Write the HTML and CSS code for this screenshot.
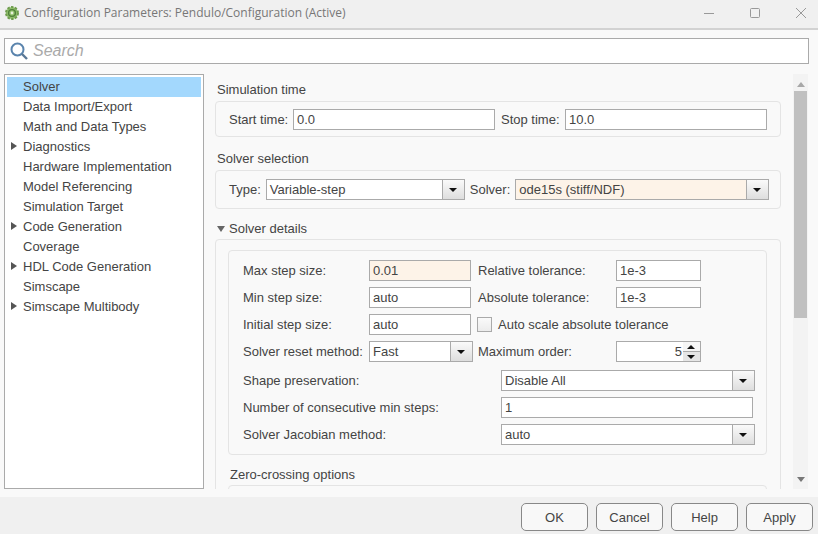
FILE: index.html
```html
<!DOCTYPE html>
<html lang="en">
<head>
    <meta charset="UTF-8">
    <title>Configuration Parameters</title>
    <link rel="stylesheet" href="styles.css">
</head>
<body>
    <div class="window">
        <header class="titlebar">
            <svg class="app-icon" width="16" height="16" viewBox="0 0 16 16">
                <circle cx="8" cy="8" r="6" fill="#8fbf6a" stroke="#6f9c4e" stroke-width="2" stroke-dasharray="2.4 1.4"/>
                <circle cx="8" cy="8" r="3.4" fill="none" stroke="#4f7f3a" stroke-width="1.4"/>
                <circle cx="8" cy="8" r="1.4" fill="#e8f0dc"/>
            </svg>
            <span class="title">Configuration Parameters: Pendulo/Configuration (Active)</span>
            <div class="window-buttons">
                <svg width="12" height="12" viewBox="0 0 12 12"><path d="M1 6.5h10" stroke="#999" fill="none"/></svg>
                <svg width="12" height="12" viewBox="0 0 12 12"><rect x="1.5" y="1.5" width="9" height="9" rx="1" stroke="#999" fill="none"/></svg>
                <svg width="12" height="12" viewBox="0 0 12 12"><path d="M1 1l10 10M11 1L1 11" stroke="#999" fill="none"/></svg>
            </div>
        </header>

        <div class="search">
            <svg width="20" height="20" viewBox="0 0 20 20">
                <circle cx="8.5" cy="8.5" r="6" fill="none" stroke="#5a84ad" stroke-width="2"/>
                <path d="M13 13l5 5" stroke="#5a7896" stroke-width="2.4" fill="none"/>
            </svg>
            <span>Search</span>
        </div>

        <div class="content">
            <ul class="tree">
                <li class="selected">Solver</li>
                <li>Data Import/Export</li>
                <li>Math and Data Types</li>
                <li class="expandable">Diagnostics</li>
                <li>Hardware Implementation</li>
                <li>Model Referencing</li>
                <li>Simulation Target</li>
                <li class="expandable">Code Generation</li>
                <li>Coverage</li>
                <li class="expandable">HDL Code Generation</li>
                <li>Simscape</li>
                <li class="expandable">Simscape Multibody</li>
            </ul>

            <main class="pane">
                <h2 class="group-title">Simulation time</h2>
                <section class="panel time-panel">
                    <label>Start time:</label>
                    <div class="field time-field">0.0</div>
                    <label>Stop time:</label>
                    <div class="field time-field">10.0</div>
                </section>

                <h2 class="group-title">Solver selection</h2>
                <section class="panel solver-panel">
                    <label>Type:</label>
                    <div class="combo type-combo"><span>Variable-step</span><i></i></div>
                    <label>Solver:</label>
                    <div class="combo solver-combo modified"><span>ode15s (stiff/NDF)</span><i></i></div>
                </section>

                <h2 class="group-title details-title"><b class="caret-down"></b>Solver details</h2>
                <section class="panel outer-panel">
                    <div class="panel inner-panel">
                        <div class="grid-top">
                            <label>Max step size:</label>
                            <div class="field step-field modified">0.01</div>
                            <label>Relative tolerance:</label>
                            <div class="field tol-field">1e-3</div>

                            <label>Min step size:</label>
                            <div class="field step-field">auto</div>
                            <label>Absolute tolerance:</label>
                            <div class="field tol-field">1e-3</div>

                            <label>Initial step size:</label>
                            <div class="field step-field">auto</div>
                            <label class="check-label"><b class="checkbox"></b>Auto scale absolute tolerance</label>

                            <label>Solver reset method:</label>
                            <div class="combo reset-combo"><span>Fast</span><i></i></div>
                            <label>Maximum order:</label>
                            <div class="field tol-field spinner"><span>5</span><div class="spin-arrows"><i class="up"></i><i></i></div></div>
                        </div>
                        <div class="grid-bottom">
                            <label>Shape preservation:</label>
                            <div class="combo wide-combo"><span>Disable All</span><i></i></div>
                            <label>Number of consecutive min steps:</label>
                            <div class="field wide-field">1</div>
                            <label>Solver Jacobian method:</label>
                            <div class="combo wide-combo"><span>auto</span><i></i></div>
                        </div>
                    </div>
                    <h2 class="group-title zero-title">Zero-crossing options</h2>
                    <div class="panel zero-panel"></div>
                </section>
            </main>

            <div class="scrollbar">
                <i class="arrow-up"></i>
                <div class="thumb"></div>
                <i class="arrow-down"></i>
            </div>
        </div>

        <footer class="buttons">
            <button>OK</button>
            <button>Cancel</button>
            <button>Help</button>
            <button>Apply</button>
        </footer>
    </div>
</body>
</html>
```

FILE: styles.css
```css
* {
    box-sizing: border-box;
}
html, body {
    margin: 0;
    padding: 0;
}
body {
    font-family: 'Liberation Sans', Arial, sans-serif;
    font-size: 13px;
    color: #444;
    background: #f9f9f9;
}
label {
    white-space: nowrap;
}
.window {
    width: 818px;
    height: 534px;
    overflow: hidden;
    display: flex;
    flex-direction: column;
}

/* title bar */
.titlebar {
    height: 30px;
    flex: none;
    display: flex;
    align-items: center;
    padding: 0 0 3px 4px;
    background: #f0f0f0;
    border-bottom: 2px solid #d2d2d2;
}
.app-icon {
    margin-right: 4px;
}
.title {
    font-family: 'Open Sans', sans-serif;
    font-size: 12px;
    color: #777;
}
.window-buttons {
    margin-left: auto;
    display: flex;
    gap: 34px;
    padding-right: 11px;
}

/* search */
.search {
    flex: none;
    height: 26px;
    margin: 8px 9px 10px 4px;
    padding-left: 4px;
    display: flex;
    align-items: center;
    gap: 4px;
    background: #fff;
    border: 1px solid #aaa;
}
.search span {
    font-size: 16px;
    font-style: italic;
    color: #aaa;
}

/* main area */
.content {
    flex: none;
    height: 415px;
    display: flex;
    padding-left: 4px;
}
.tree {
    width: 200px;
    flex: none;
    margin: 0;
    padding: 2px;
    list-style: none;
    background: #fff;
    border: 1px solid #aaa;
}
.tree li {
    position: relative;
    height: 20px;
    line-height: 20px;
    padding-left: 16px;
    color: #444;
}
.tree .selected {
    background: #a3d8fd;
}
.tree .expandable::before {
    content: "";
    position: absolute;
    left: 4px;
    top: 5px;
    border-left: 6px solid #555;
    border-top: 4px solid transparent;
    border-bottom: 4px solid transparent;
}

.pane {
    width: 589px;
    flex: none;
    padding-left: 11px;
    overflow: hidden;
}
.group-title {
    margin: 0;
    font-size: 13px;
    font-weight: normal;
    height: 15px;
    line-height: 15px;
    padding-left: 2px;
}
.pane > .group-title:first-child {
    margin-top: 8px;
}
.panel {
    border: 1px solid #e4e4e4;
    border-radius: 4px;
}
.time-panel {
    width: 566px;
    height: 36px;
    margin-top: 4px;
    margin-bottom: 14px;
    padding: 7px 0 0 13px;
    display: flex;
    align-items: flex-start;
}
.time-panel label {
    line-height: 21px;
    width: 64px;
}
.time-panel label:nth-of-type(2) {
    margin-left: 6px;
}
.field {
    height: 21px;
    line-height: 19px;
    padding-left: 3px;
    background: #fff;
    border: 1px solid #aaa;
}
.modified {
    background: #fdf3e8;
}
.time-field {
    width: 202px;
}
.combo {
    height: 21px;
    display: flex;
    background: #fff;
    border: 1px solid #aaa;
}
.combo span {
    flex: 1;
    line-height: 19px;
    padding-left: 3px;
}
.combo i {
    position: relative;
    width: 22px;
    flex: none;
    border-left: 1px solid #aaa;
    background: linear-gradient(#fafafa, #dedede);
}
.combo i::after {
    content: "";
    position: absolute;
    left: 6px;
    top: 8px;
    border-top: 4px solid #111;
    border-left: 4px solid transparent;
    border-right: 4px solid transparent;
}
.modified.combo {
    background: #fdf3e8;
}
.solver-panel {
    width: 566px;
    height: 39px;
    margin-top: 4px;
    margin-bottom: 12px;
    padding: 8px 0 0 13px;
    display: flex;
    align-items: flex-start;
}
.solver-panel label {
    line-height: 21px;
}
.type-combo {
    width: 199px;
    margin-left: 5px;
    margin-right: 5px;
}
.solver-combo {
    width: 254px;
    margin-left: 5px;
}
.details-title {
    display: flex;
    align-items: center;
    padding-left: 2px;
}
.caret-down {
    margin-right: 4px;
    border-top: 6px solid #666;
    border-left: 4px solid transparent;
    border-right: 4px solid transparent;
}
.outer-panel {
    width: 566px;
    height: 300px;
    margin-top: 3px;
    padding: 10px 0 0 12px;
}
.inner-panel {
    width: 539px;
    height: 205px;
    padding: 9px 0 0 14px;
}
.grid-top {
    display: grid;
    grid-template-columns: 126px 109px 138px 85px;
    grid-auto-rows: 21px;
    row-gap: 6px;
    align-items: center;
}
.step-field {
    width: 102px;
}
.tol-field {
    width: 85px;
}
.reset-combo {
    width: 104px;
}
.check-label {
    grid-column: 3 / span 2;
    display: flex;
    align-items: center;
}
.checkbox {
    width: 15px;
    height: 15px;
    margin-left: -1px;
    margin-right: 6px;
    background: linear-gradient(#fafafa, #ececec);
    border: 1px solid #aaa;
}
.spinner {
    display: flex;
    justify-content: flex-end;
    padding: 0;
}
.spin-arrows {
    width: 17px;
    display: flex;
    flex-direction: column;
    margin-left: 1px;
}
.spin-arrows i {
    position: relative;
    flex: 1;
    background: #e6e6e6;
}
.spin-arrows i::after {
    content: "";
    position: absolute;
    left: 4px;
    top: 3px;
    border-top: 4px solid #111;
    border-left: 4px solid transparent;
    border-right: 4px solid transparent;
}
.spin-arrows .up {
    background: #f6f6f6;
    border-bottom: 1px solid #aaa;
}
.spin-arrows .up::after {
    border-top: 0;
    border-bottom: 4px solid #111;
}
.grid-bottom {
    display: grid;
    grid-template-columns: 258px 254px;
    grid-auto-rows: 21px;
    row-gap: 6px;
    align-items: center;
    margin-top: 8px;
}
.wide-field {
    width: 252px;
}
.zero-title {
    margin-top: 12px;
    padding-left: 2px;
}
.zero-panel {
    width: 539px;
    height: 40px;
    margin-top: 3px;
}

/* scrollbar */
.scrollbar {
    width: 15px;
    flex: none;
    position: relative;
    background: #f3f3f3;
    display: flex;
    flex-direction: column;
    align-items: center;
    padding: 0 1px;
}
.thumb {
    width: 13px;
    height: 227px;
    background: #c0c0c0;
    margin-top: 4px;
}
.arrow-up, .arrow-down {
    flex: none;
    border-left: 4px solid transparent;
    border-right: 4px solid transparent;
}
.arrow-up {
    margin-top: 8px;
    border-bottom: 5px solid #a8a8a8;
}
.arrow-down {
    margin-top: auto;
    margin-bottom: 7px;
    border-top: 5px solid #777;
}

/* footer */
.buttons {
    flex: none;
    height: 37px;
    margin-top: 8px;
    padding: 6px 5px 0 0;
    background: #f0f0f0;
    display: flex;
    justify-content: flex-end;
    gap: 8px;
}
.buttons button {
    width: 67px;
    height: 28px;
    font-family: 'Liberation Sans', Arial, sans-serif;
    font-size: 13px;
    color: #444;
    background: #f8f8f8;
    border: 1px solid #888;
    border-radius: 5px;
    padding: 0;
}
```
